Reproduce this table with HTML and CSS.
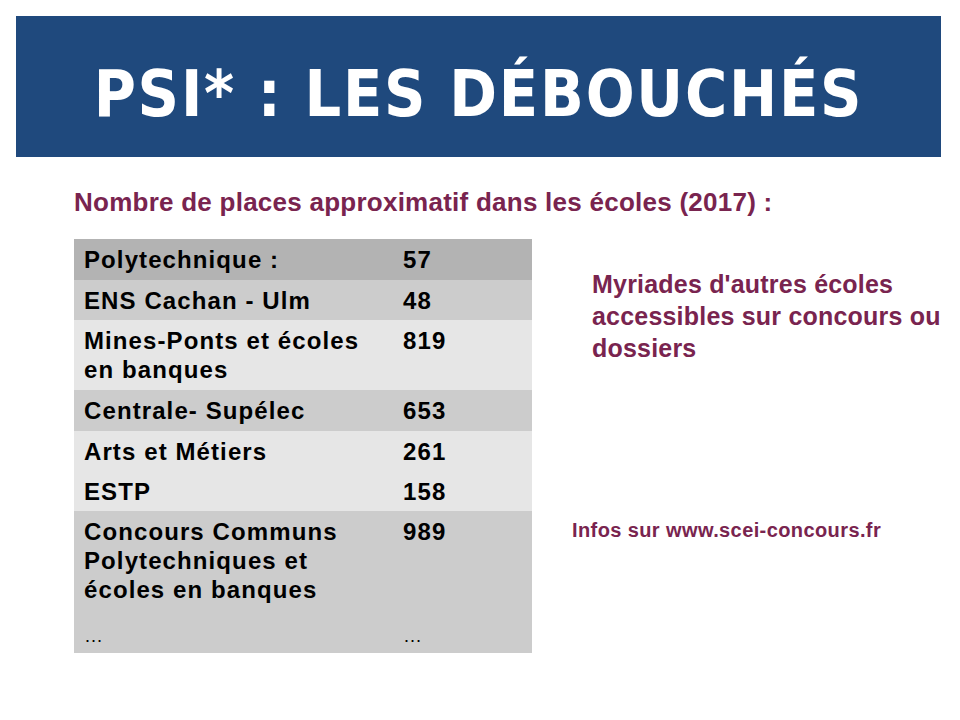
FILE: index.html
```html
<!DOCTYPE html>
<html lang="fr">
<head>
<meta charset="utf-8">
<title>PSI* : les débouchés</title>
<link rel="stylesheet" href="styles.css">
</head>
<body>
<header class="banner">
  <h1 class="title">PSI* : LES DÉBOUCHÉS</h1>
</header>
<p class="subtitle">Nombre de places approximatif dans les écoles (2017) :</p>
<main class="content">
  <table class="places">
    <tr class="r-dark h41"><td class="name">Polytechnique :</td><td class="num">57</td></tr>
    <tr class="r-mid h40"><td class="name">ENS Cachan - Ulm</td><td class="num">48</td></tr>
    <tr class="r-light h70"><td class="name">Mines-Ponts et écoles en banques</td><td class="num">819</td></tr>
    <tr class="r-mid h41"><td class="name">Centrale- Supélec</td><td class="num">653</td></tr>
    <tr class="r-light h40"><td class="name">Arts et Métiers</td><td class="num">261</td></tr>
    <tr class="r-light h40"><td class="name">ESTP</td><td class="num">158</td></tr>
    <tr class="r-mid h100"><td class="name">Concours Communs Polytechniques et écoles en banques</td><td class="num">989</td></tr>
    <tr class="r-mid h42 more"><td class="name">…</td><td class="num">…</td></tr>
  </table>
  <aside class="side">
    <p class="myriad">Myriades d'autres écoles<br>accessibles sur concours ou<br>dossiers</p>
    <p class="infos">Infos sur www.scei-concours.fr</p>
  </aside>
</main>
</body>
</html>
```
FILE: styles.css
```css
html, body {
  margin: 0;
  padding: 0;
  background: #ffffff;
}
body {
  width: 960px;
  height: 720px;
  overflow: hidden;
  font-family: "Liberation Sans", Arial, sans-serif;
}
.banner {
  margin: 16px 19px 0 16px;
  height: 141px;
  background: #1f497d;
  display: flex;
  align-items: center;
  justify-content: center;
}
.title {
  margin: 0;
  padding-top: 14px;
  color: #ffffff;
  font-family: "DejaVu Sans Condensed", "DejaVu Sans", sans-serif;
  font-weight: bold;
  font-size: 64px;
  line-height: 80px;
  letter-spacing: 1.8px;
  white-space: nowrap;
}
.subtitle {
  margin: 30px 0 0 74px;
  color: #79244f;
  font-family: "Liberation Sans", Arial, sans-serif;
  font-weight: bold;
  font-size: 26px;
  line-height: 30px;
  letter-spacing: 0.25px;
  white-space: nowrap;
}
.content {
  display: flex;
  align-items: flex-start;
  margin: 22px 0 0 74px;
}
.places {
  border-collapse: collapse;
  width: 458px;
  table-layout: fixed;
}
.places td {
  padding: 6px 0 0 10px;
  vertical-align: top;
  font-weight: bold;
  font-size: 24px;
  line-height: 29px;
  letter-spacing: 1.1px;
  color: #000000;
}
.places td.name { width: 310px; }
.places td.num { width: 129px; padding-left: 9px; }
.r-dark { background: #b3b3b3; }
.r-mid { background: #cccccc; }
.r-light { background: #e6e6e6; }
.h40 td { height: 34px; }
.h41 td { height: 35px; }
.h42 td { height: 36px; }
.h70 td { height: 64px; }
.h100 td { height: 94px; }
.places .more td {
  padding-top: 15px;
  height: 27px;
  font-weight: normal;
  font-size: 19px;
  line-height: 20px;
  letter-spacing: 0;
}
.side {
  display: flex;
  flex-direction: column;
  margin-left: 40px;
  color: #79244f;
  font-weight: bold;
}
.myriad {
  margin: 29px 0 0 20px;
  font-size: 25px;
  line-height: 32px;
  letter-spacing: 0.2px;
  white-space: nowrap;
}
.infos {
  margin: 154px 0 0 0;
  font-size: 20px;
  line-height: 24px;
  letter-spacing: 0.4px;
  white-space: nowrap;
}
```
